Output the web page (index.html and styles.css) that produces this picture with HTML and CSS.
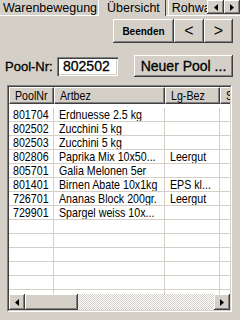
FILE: index.html
```html
<!DOCTYPE html>
<html lang="de">
<head>
    <meta charset="UTF-8">
    <meta name="viewport" content="width=device-width, initial-scale=1.0">
    <title>Übersicht</title>
    <link rel="stylesheet" href="styles.css">
</head>
<body>
    <div class="tabs">
        <div class="tab-list">
            <div class="tab first">Warenbewegung</div>
            <div class="tab active">Übersicht</div>
            <div class="tab next">Rohwaren</div>
        </div>
        <div class="tab-scroll">
            <div class="raised scroll-btn wide">
                <svg width="4" height="7" viewBox="0 0 4 7"><path d="M4 0V7L0 3.5Z" fill="#000"/></svg>
            </div>
            <div class="raised scroll-btn">
                <svg width="4" height="7" viewBox="0 0 4 7"><path d="M0 0V7L4 3.5Z" fill="#000"/></svg>
            </div>
        </div>
    </div>

    <div class="panel">
        <div class="toolbar">
            <button class="raised btn beenden">Beenden</button>
            <button class="raised btn nav prev">&lt;</button>
            <button class="raised btn nav next-btn">&gt;</button>
        </div>

        <div class="pool-row">
            <label class="pool-label" for="pool">Pool-Nr:</label>
            <input class="pool-input" id="pool" type="text" value="802502">
            <button class="raised btn neu">Neuer Pool ...</button>
        </div>

        <div class="grid">
            <div class="grid-inner">
                <div class="grid-view">
                    <div class="grid-head">
                        <div class="th"><span>PoolNr</span></div>
                        <div class="th"><span>Artbez</span></div>
                        <div class="th"><span>Lg-Bez</span></div>
                        <div class="th"><span>S</span></div>
                    </div>
                    <div class="grid-rows">
                        <div class="row"><div class="td"><span>801704</span></div><div class="td"><span>Erdnuesse 2.5 kg</span></div><div class="td"></div><div class="td"></div></div>
                        <div class="row"><div class="td"><span>802502</span></div><div class="td"><span>Zucchini 5 kg</span></div><div class="td"></div><div class="td"></div></div>
                        <div class="row"><div class="td"><span>802503</span></div><div class="td"><span>Zucchini 5 kg</span></div><div class="td"></div><div class="td"></div></div>
                        <div class="row"><div class="td"><span>802806</span></div><div class="td"><span>Paprika Mix 10x50...</span></div><div class="td"><span>Leergut</span></div><div class="td"></div></div>
                        <div class="row"><div class="td"><span>805701</span></div><div class="td"><span>Galia Melonen 5er</span></div><div class="td"></div><div class="td"></div></div>
                        <div class="row"><div class="td"><span>801401</span></div><div class="td"><span>Birnen Abate 10x1kg</span></div><div class="td"><span>EPS kl...</span></div><div class="td"></div></div>
                        <div class="row"><div class="td"><span>726701</span></div><div class="td"><span>Ananas Block 200gr.</span></div><div class="td"><span>Leergut</span></div><div class="td"></div></div>
                        <div class="row"><div class="td"><span>729901</span></div><div class="td"><span>Spargel weiss 10x...</span></div><div class="td"></div><div class="td"></div></div>
                        <div class="row"><div class="td"></div><div class="td"></div><div class="td"></div><div class="td"></div></div>
                        <div class="row"><div class="td"></div><div class="td"></div><div class="td"></div><div class="td"></div></div>
                        <div class="row"><div class="td"></div><div class="td"></div><div class="td"></div><div class="td"></div></div>
                        <div class="row"><div class="td"></div><div class="td"></div><div class="td"></div><div class="td"></div></div>
                        <div class="row"><div class="td"></div><div class="td"></div><div class="td"></div><div class="td"></div></div>
                        <div class="row"><div class="td"></div><div class="td"></div><div class="td"></div><div class="td"></div></div>
                    </div>
                </div>
                <div class="hscroll">
                    <div class="raised sb-btn">
                        <svg width="4" height="7" viewBox="0 0 4 7"><path d="M4 0V7L0 3.5Z" fill="#000"/></svg>
                    </div>
                    <div class="raised sb-thumb"></div>
                    <div class="sb-track"></div>
                    <div class="raised sb-btn">
                        <svg width="4" height="7" viewBox="0 0 4 7"><path d="M0 0V7L4 3.5Z" fill="#000"/></svg>
                    </div>
                </div>
            </div>
        </div>
    </div>
</body>
</html>
```

FILE: styles.css
```css
* {
    box-sizing: border-box;
}
body {
    margin: 0;
    width: 240px;
    height: 320px;
    overflow: hidden;
    background-color: #d4d0c8;
    font-family: "Liberation Sans", Arial, sans-serif;
    color: #000;
}

/* tab strip */
.tabs {
    display: flex;
    height: 16px;
    border-bottom: 1px solid #fff;
}
.tab-list {
    flex: 1;
    display: flex;
    height: 16px;
    margin-left: -3px;
    overflow: hidden;
}
.tab {
    height: 15px;
    padding: 1px 5px 0;
    line-height: 14px;
    font-size: 12.5px;
    white-space: nowrap;
    border-left: 1px solid #fff;
    border-right: 1px solid #404040;
}
.tab.active {
    height: 16px;
    margin-left: -5px;
    padding-left: 8px;
    background-color: #d4d0c8;
    z-index: 1;
}
.tab.next {
    margin-left: 2px;
    padding-left: 3px;
}
.tab-scroll {
    display: flex;
    height: 14px;
}
.scroll-btn {
    width: 16px;
    height: 14px;
    display: flex;
    align-items: center;
    justify-content: center;
}
.scroll-btn.wide {
    width: 17px;
}

/* classic 3d face */
.raised {
    background-color: #d4d0c8;
    box-shadow: inset -1px -1px #404040, inset 1px 1px #fff, inset -2px -2px #808080;
}

/* panel */
.panel {
    padding-top: 3px;
}
.toolbar {
    display: flex;
    justify-content: flex-end;
    padding-right: 7px;
    height: 24px;
}
.btn {
    border: 0;
    padding: 0;
    margin: 0;
    font-family: "Liberation Sans", Arial, sans-serif;
    color: #000;
    height: 24px;
}
.beenden {
    width: 61px;
    font-size: 10px;
    font-weight: bold;
}
.nav {
    font-size: 16px;
    padding-bottom: 1px;
}
.prev {
    width: 30px;
}
.next-btn {
    width: 29px;
}

.pool-row {
    display: flex;
    align-items: center;
    height: 22px;
    margin-top: 12px;
    padding: 0 7px 0 5px;
}
.pool-label {
    width: 52px;
    font-size: 13px;
    -webkit-text-stroke: 0.3px #000;
}
.pool-input {
    width: 61px;
    height: 19px;
    border: 0;
    padding: 0 0 0 6px;
    background-color: #fff;
    font-family: "Liberation Sans", Arial, sans-serif;
    font-size: 14px;
    color: #000;
    -webkit-text-stroke: 0.3px #000;
    box-shadow: inset 1px 1px #808080, inset 2px 2px #404040, inset -1px -1px #fff, inset -2px -2px #d4d0c8;
    outline: none;
}
.neu {
    margin-left: auto;
    width: 99px;
    height: 22px;
    font-size: 14px;
    -webkit-text-stroke: 0.3px #000;
}

/* grid */
.grid {
    width: 225px;
    height: 227px;
    margin: 8px 0 0 7px;
    border: 1px solid;
    border-color: #808080 #fff #fff #808080;
}
.grid-inner {
    height: 100%;
    display: flex;
    flex-direction: column;
    border: 1px solid;
    border-color: #404040 #d4d0c8 #d4d0c8 #404040;
    background-color: #fff;
}
.grid-view {
    flex: 1;
    overflow: hidden;
    font-size: 13px;
}
/* the device font is a narrow face: squeeze Liberation Sans to match */
.th span,
.td span {
    display: inline-block;
    transform: scaleX(0.82);
    transform-origin: 0 0;
}
.grid-head,
.row {
    display: grid;
    grid-template-columns: 45px 111px 55px 40px;
}
.th {
    height: 17px;
    padding: 1px 0 0 5px;
    line-height: 14px;
    white-space: nowrap;
    overflow: hidden;
    background-color: #d4d0c8;
    border: 1px solid;
    border-color: #fff #404040 #404040 #fff;
    box-shadow: inset -1px -1px #808080;
}
.grid-rows {
    padding-top: 4px;
}
.row {
    height: 14px;
}
.td {
    padding-left: 5px;
    line-height: 13px;
    white-space: nowrap;
    overflow: hidden;
    border-right: 1px solid #d4d0c8;
    border-bottom: 1px solid #d4d0c8;
}
.td:first-child {
    padding-left: 4px;
}

/* horizontal scrollbar */
.hscroll {
    display: flex;
    height: 16px;
}
.sb-btn {
    width: 16px;
    display: flex;
    align-items: center;
    justify-content: center;
}
.sb-thumb {
    width: 53px;
}
.sb-track {
    flex: 1;
    background-image: conic-gradient(#fff 25%, #d4d0c8 0 50%, #fff 0 75%, #d4d0c8 0);
    background-size: 2px 2px;
}
```
